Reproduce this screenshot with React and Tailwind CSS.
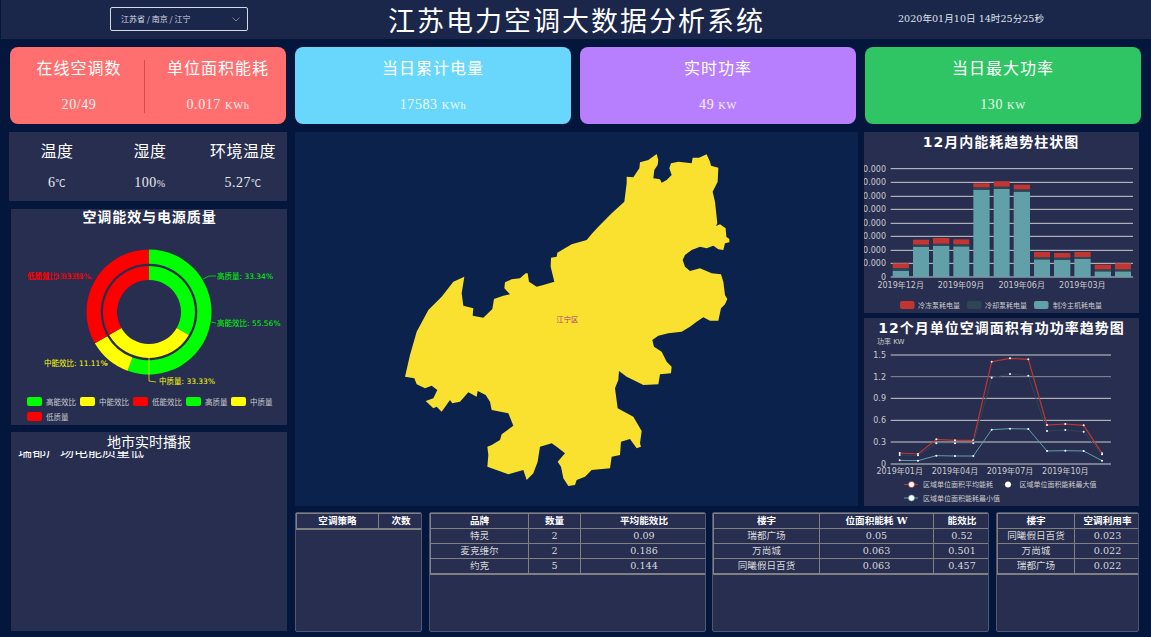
const serif = "font-['DejaVu_Serif','Noto_Sans_CJK_SC',serif]"
const SANS = "'DejaVu Sans','Noto Sans CJK SC',sans-serif"

const MAP_POINTS = `785,27 790,45 788,60 778,75 775,100 795,103 800,113 815,105 830,90 823,70 828,55 850,50 890,55 893,38 912,38 935,28 945,50 948,62 970,68 968,110 953,140 960,170 967,235 963,243 975,238 992,250 994,275 1003,282 1003,292 990,295 985,315 970,313 955,302 935,310 915,305 890,315 870,330 863,345 870,365 885,378 915,370 950,385 978,388 985,410 990,450 997,462 990,478 978,490 970,527 945,527 925,517 905,530 885,545 860,560 820,565 790,572 772,585 777,605 800,620 815,650 830,665 828,685 795,688 790,718 745,720 715,705 695,695 672,678 670,705 660,730 668,790 715,815 740,858 735,895 738,905 725,910 705,882 678,890 675,930 650,935 645,970 590,975 570,995 545,1005 540,1020 520,1023 505,1000 498,965 488,950 510,925 485,905 470,895 435,905 428,950 415,985 395,1005 385,975 340,988 277,965 280,930 277,905 290,900 315,885 320,868 355,842 340,805 290,795 285,770 272,750 248,738 245,755 220,742 195,770 172,775 165,765 140,800 125,785 115,790 92,768 115,760 127,735 110,722 90,730 65,718 58,700 30,695 45,630 65,560 100,495 140,455 175,410 208,395 200,445 205,482 235,490 233,512 265,518 292,492 297,462 325,452 345,448 328,430 330,412 350,403 375,400 392,385 398,385 402,410 425,425 445,420 478,410 467,365 468,338 485,335 487,323 530,298 575,285 592,265 610,245 630,225 650,205 688,170 695,115 695,95 715,97 733,70 735,52 760,45`

// bar chart numbers are in zoomed px, converted in Bars()
const BARS = [
  [98, 147, 428, 420, 406], [159, 207, 356, 350, 335], [219, 268, 353, 347, 330], [280, 328, 355, 349, 334],
  [340, 389, 185, 178, 166], [401, 449, 183, 176, 160], [461, 510, 191, 184, 170], [522, 570, 394, 388, 372],
  [582, 631, 395, 389, 375], [643, 692, 392, 387, 372], [704, 753, 430, 424, 410], [765, 813, 430, 424, 406],
]
const LINE_X = [119, 174, 229, 285, 340, 395, 450, 505, 561, 616, 671, 726]
const LINES = [
  { color: '#c23531', width: 1.2, ys: [414, 417, 373, 376, 376, 140, 130, 133, 330, 327, 331, 415] },
  { color: '#2f4554', width: 1, ys: [420, 421, 385, 385, 385, 188, 177, 182, 348, 345, 350, 418] },
  { color: '#61a0a8', width: 1, ys: [436, 437, 422, 423, 423, 344, 341, 342, 408, 407, 408, 437] },
]

const TABLES = [
  { cls: 'w-[127px]', cols: ['82px', '45px'], head: ['空调策略', '次数'], rows: [] },
  { cls: 'w-[277px] ml-[7px]', cols: ['98px', '52px', '127px'], head: ['品牌', '数量', '平均能效比'], rows: [['特灵', '2', '0.09'], ['麦克维尔', '2', '0.186'], ['约克', '5', '0.144']] },
  { cls: 'w-[277px] ml-[6px]', cols: ['106px', '114px', '57px'], head: ['楼宇', '位面积能耗 W', '能效比'], rows: [['瑞都广场', '0.05', '0.52'], ['万尚城', '0.063', '0.501'], ['同曦假日百货', '0.063', '0.457']] },
  { cls: 'w-[143px] ml-[7px]', cols: ['77px', '66px'], head: ['楼宇', '空调利用率'], rows: [['同曦假日百货', '0.023'], ['万尚城', '0.022'], ['瑞都广场', '0.022']] },
]

function arc(cx, cy, r0, r1, a0, a1) {
  const pt = (r, a) => {
    const t = (a - 90) * Math.PI / 180
    return `${(cx + r * Math.cos(t)).toFixed(2)} ${(cy + r * Math.sin(t)).toFixed(2)}`
  }
  const big = a1 - a0 > 180 ? 1 : 0
  return `M${pt(r1, a0)}A${r1} ${r1} 0 ${big} 1 ${pt(r1, a1)}L${pt(r0, a1)}A${r0} ${r0} 0 ${big} 0 ${pt(r0, a0)}Z`
}

function StatItem({ title, value, unit, className = 'flex-1' }) {
  return (
    <div className={`flex flex-col items-center pt-[10px] ${className}`}>
      <div className="font-['Noto_Sans_CJK_SC',sans-serif] text-[16px] leading-[20px] tracking-[1px]">{title}</div>
      <div className="mt-[18px] text-[14px] leading-[20px] text-white/90 font-['Liberation_Serif','Noto_Sans_CJK_SC',serif] tracking-[0.6px]">
        {value}{unit && <span className="text-[10.5px] ml-[4px]">{unit}</span>}
      </div>
    </div>
  )
}

function Donut() {
  const cx = 149, cy = 312
  const outer = [['#00ff00', 0, 200], ['#ffff00', 200, 240], ['#ff0000', 240, 360]]
  const inner = [['#00ff00', 0, 120], ['#ffff00', 120, 240], ['#ff0000', 240, 360]]
  const legend = [
    [27, 402, '#00ff00', '高能效比'], [80, 402, '#ffff00', '中能效比'], [133, 402, '#ff0000', '低能效比'],
    [186, 402, '#00ff00', '高质量'], [231, 402, '#ffff00', '中质量'], [27, 417, '#ff0000', '低质量'],
  ]
  return (
    <svg className="w-full h-full block" viewBox="11 209 276 216" fontFamily={SANS}>
      <text x="149.5" y="222" textAnchor="middle" fill="#fff" fontSize="14" fontWeight="700" letterSpacing="0.9">空调能效与电源质量</text>
      {outer.map(([c, a, b]) => <path key={a} d={arc(cx, cy, 48.3, 62.5, a, b)} fill={c} />)}
      {inner.map(([c, a, b]) => <path key={a} d={arc(cx, cy, 32, 46, a, b)} fill={c} />)}
      <path d="M203 279L209 276H216" fill="none" stroke="#00ff00" strokeWidth="0.7" />
      <path d="M211 322L216 323" fill="none" stroke="#00ff00" strokeWidth="0.7" />
      <path d="M149 358V381L156 382" fill="none" stroke="#ffff00" strokeWidth="0.7" />
      <path d="M108 364L104 364" fill="none" stroke="#ffff00" strokeWidth="0.7" />
      <path d="M93 279L88 277" fill="none" stroke="#ff0000" strokeWidth="0.7" />
      <g fontSize="7.5">
        <text x="217" y="279" fill="#00ff00">高质量: 33.34%</text>
        <text x="217" y="326" fill="#00ff00">高能效比: 55.56%</text>
        <text x="159" y="384" fill="#ffff00">中质量: 33.33%</text>
        <text x="44" y="366" fill="#ffff00">中能效比: 11.11%</text>
        <text x="27" y="279" fill="#ff0000">低能效比: 33.33%</text>
        <text x="27" y="279" fill="#ff0000">低质量: 33.33%</text>
      </g>
      {legend.map(([x, y, c, t]) => (
        <g key={t}>
          <rect x={x} y={y - 5} width="15" height="9" rx="2" fill={c} />
          <text x={x + 19} y={y + 3} fontSize="7.5" fill="#cccccc">{t}</text>
        </g>
      ))}
    </svg>
  )
}

function Bars() {
  const X = v => 860 + v / 3
  const Y = v => 128 + v / 3
  const grid = [122, 163, 205, 244, 286, 325, 367, 406, 447]
  const labels = ['80.000', '70.000', '60.000', '50.000', '40.000', '30.000', '20.000', '10.000', '0']
  const legend = [[900, 918, '#c23531', '冷冻泵耗电量'], [967, 985, '#2f4554', '冷却泵耗电量'], [1034, 1053, '#61a0a8', '制冷主机耗电量']]
  return (
    <svg className="w-full h-full block" viewBox="864 132 275 181" fontFamily={SANS}>
      <text x="1001" y="147" textAnchor="middle" fill="#fff" fontSize="14" fontWeight="700" letterSpacing="1">12月内能耗趋势柱状图</text>
      {grid.map((y, i) => (
        <g key={y}>
          <line x1="890.7" x2="1133" y1={Y(y)} y2={Y(y)} stroke="#cccccc" />
          <text x="886" y={Y(y) + 3} textAnchor="end" fontSize="8" fill="#cccccc">{labels[i]}</text>
        </g>
      ))}
      {BARS.map(([a, b, teal, dark, red]) => (
        <g key={a}>
          <rect x={X(a)} width={(b - a) / 3} y={Y(teal)} height={(447 - teal) / 3} fill="#61a0a8" />
          <rect x={X(a)} width={(b - a) / 3} y={Y(dark)} height={(teal - dark) / 3} fill="#2f4554" />
          <rect x={X(a)} width={(b - a) / 3} y={Y(red)} height={(dark - red) / 3} fill="#c23531" />
        </g>
      ))}
      {[['2019年12月', 122], ['2019年09月', 303], ['2019年06月', 485], ['2019年03月', 667]].map(([t, x]) => (
        <text key={t} x={X(x)} y="288" textAnchor="middle" fontSize="8" fill="#cccccc">{t}</text>
      ))}
      {legend.map(([x, tx, c, t]) => (
        <g key={t}>
          <rect x={x} y="301" width="14.5" height="8" rx="2" fill={c} />
          <text x={tx} y="308" fontSize="7" fill="#cccccc">{t}</text>
        </g>
      ))}
    </svg>
  )
}

function Lines() {
  const X = v => 860 + v / 3
  const Y = v => 315 + v / 3
  const grid = [[120, '1.5'], [185, '1.2'], [250, '0.9'], [316, '0.6'], [381, '0.3'], [447, '0']]
  return (
    <svg className="w-full h-full block" viewBox="864 318 275 188" fontFamily={SANS}>
      <text x="1001.5" y="333" textAnchor="middle" fill="#fff" fontSize="14" fontWeight="700" letterSpacing="1">12个月单位空调面积有功功率趋势图</text>
      <text x="877" y="344" fontSize="7" fill="#cccccc">功率 KW</text>
      {grid.map(([y, t]) => (
        <g key={y}>
          <line x1="890.7" x2="1111" y1={Y(y)} y2={Y(y)} stroke="#cccccc" strokeOpacity={y === 185 ? 0.6 : 1} />
          <text x="886" y={Y(y) + 3} textAnchor="end" fontSize="8" fill="#cccccc">{t}</text>
        </g>
      ))}
      {LINES.map(line => (
        <g key={line.color}>
          <polyline points={LINE_X.map((x, i) => `${X(x)},${Y(line.ys[i])}`).join(' ')} fill="none" stroke={line.color} strokeWidth={line.width} />
          {LINE_X.map((x, i) => <circle key={x} cx={X(x)} cy={Y(line.ys[i])} r="1" fill="#fff" />)}
        </g>
      ))}
      {[['2019年01月', 119], ['2019年04月', 285], ['2019年07月', 450], ['2019年10月', 616]].map(([t, x]) => (
        <text key={t} x={X(x)} y="474" textAnchor="middle" fontSize="8" fill="#cccccc">{t}</text>
      ))}
      <line x1="904" x2="918" y1="484.5" y2="484.5" stroke="#c23531" />
      <circle cx="911.5" cy="484.5" r="3" fill="#fff" stroke="#c23531" strokeWidth="0.6" />
      <text x="923" y="487" fontSize="7" fill="#cccccc">区域单位面积平均能耗</text>
      <line x1="1001" x2="1015" y1="484.5" y2="484.5" stroke="#2f4554" />
      <circle cx="1008" cy="484.5" r="3" fill="#fff" />
      <text x="1019.5" y="487" fontSize="7" fill="#cccccc">区域单位面积能耗最大值</text>
      <line x1="904" x2="918" y1="498" y2="498" stroke="#61a0a8" />
      <circle cx="911.5" cy="498" r="3" fill="#fff" stroke="#61a0a8" strokeWidth="0.6" />
      <text x="923" y="500.5" fontSize="7" fill="#cccccc">区域单位面积能耗最小值</text>
    </svg>
  )
}

function DataTable({ t }) {
  return (
    <div className={`${t.cls} h-[120px] bg-[#272e50] border border-[#4f5772] rounded-[2px] overflow-hidden`}>
      <table className={`w-full table-fixed border-collapse text-[9.6px] border-b-2 border-b-[#808080] ${serif}`}>
        <colgroup>{t.cols.map((w, i) => <col key={i} style={{ width: w }} />)}</colgroup>
        <thead>
          <tr className="h-[15px]">
            {t.head.map(h => <th key={h} className="border border-[#808080] p-0 font-bold text-white leading-none">{h}</th>)}
          </tr>
        </thead>
        {t.rows.length > 0 && (
          <tbody>
            {t.rows.map(r => (
              <tr key={r[0]} className="h-[15px]">
                {r.map((c, i) => <td key={i} className="border border-[#808080] p-0 text-center text-[#d8d8d8] leading-none">{c}</td>)}
              </tr>
            ))}
          </tbody>
        )}
      </table>
    </div>
  )
}

export default function App() {
  return (
    <div className="w-[1151px] h-[637px] bg-[#04163b] overflow-hidden text-white">
      {/* Header */}
      <div className="h-[39px] ml-px bg-[#1a274a] flex items-center relative">
        <div className="absolute left-[109px] top-[7px] w-[138px] h-[24px] border border-[#d5d9e3] rounded-[2px] flex items-center justify-between pl-[10px] pr-[7px] font-['Noto_Sans_CJK_SC',sans-serif] text-[8px] text-[#d8dbe3]">
          <span>江苏省 / 南京 / 江宁</span>
          <svg width="8" height="5" viewBox="0 0 8 5" fill="none" stroke="#8e96ab" strokeWidth="0.8"><path d="M0.5 0.5L4 4L7.5 0.5" /></svg>
        </div>
        <div className="w-full pl-[1px] text-center font-['Noto_Sans_CJK_SC',sans-serif] text-[27px] leading-[36px] tracking-[2px]">江苏电力空调大数据分析系统</div>
        <div className={`absolute left-[897px] top-[12px] text-[9.6px] leading-[14px] text-[#dfe2ea] ${serif}`}>2020年01月10日 14时25分25秒</div>
      </div>

      {/* Stat cards */}
      <div className="mt-2 px-[10px] grid grid-cols-4 gap-[9px]">
        <div className="h-[77px] rounded-lg flex text-white bg-[#ff6f6f]">
          <StatItem className="w-[134px] pl-[4px]" title="在线空调数" value="20/49" />
          <div className="w-px h-[53px] mt-[13px] bg-[#d9484f]" />
          <StatItem className="flex-1 pl-[5px]" title="单位面积能耗" value="0.017" unit="KWh" />
        </div>
        <div className="h-[77px] rounded-lg flex text-white bg-[#69d7fb]"><StatItem title="当日累计电量" value="17583" unit="KWh" /></div>
        <div className="h-[77px] rounded-lg flex text-white bg-[#b77efd]"><StatItem title="实时功率" value="49" unit="KW" /></div>
        <div className="h-[77px] rounded-lg flex text-white bg-[#30c564]"><StatItem title="当日最大功率" value="130" unit="KW" /></div>
      </div>

      <div className="mt-2 ml-[9px] flex">
        {/* Left column */}
        <div className="w-[278px] flex flex-col">
          <div className="h-[69px] bg-[#272e50] grid grid-cols-[96px_90px_92px]">
            {[['温度', '6', '℃', ''], ['湿度', '100', '%', ''], ['环境温度', '5.27', '℃', 'pl-[4px]']].map(([t, v, u, cls]) => (
              <div key={t} className={`flex flex-col items-center pt-[8px] whitespace-nowrap ${cls}`}>
                <div className="font-['Noto_Sans_CJK_SC',sans-serif] text-[16px] leading-[20px] tracking-[0.5px]">{t}</div>
                <div className="mt-[14px] font-['Liberation_Serif','Noto_Sans_CJK_SC',serif] text-[14px] leading-[18px] tracking-[0.5px] text-white/90">
                  {v}<span className="text-[10px]">{u}</span>
                </div>
              </div>
            ))}
          </div>
          <div className="ml-[2px] mt-[8px] h-[216px] bg-[#272e50]"><Donut /></div>
          <div className="ml-[2px] mt-[7px] h-[199px] bg-[#272e50] flex flex-col">
            <div className="text-center font-['Noto_Sans_CJK_SC',sans-serif] text-[14px] leading-[19px]">地市实时播报</div>
            {/* ticker, caught mid-scroll */}
            <div className="overflow-hidden">
              <div className="-mt-[11px] pl-[7px] font-['Noto_Sans_CJK_SC',sans-serif] text-[14px] leading-[20px]">瑞都广场电能质量低</div>
            </div>
          </div>
        </div>

        <div className="ml-[8px] w-[844px] flex flex-col">
          <div className="h-[374px] flex gap-[6px]">
            {/* Map */}
            <div className="w-[563px] bg-[#0a224c]">
              <svg className="w-full h-full block" viewBox="295 132 563 374">
                <g transform="translate(395 145) scale(0.33333)">
                  <polygon points={MAP_POINTS} fill="#fae02f" />
                  <text x="517" y="530" textAnchor="middle" fontSize="22" fontFamily={SANS} fill="#b0308c">江宁区</text>
                </g>
              </svg>
            </div>
            {/* Right charts */}
            <div className="w-[275px] flex flex-col gap-[5px]">
              <div className="h-[181px] bg-[#272e50]"><Bars /></div>
              <div className="h-[188px] bg-[#272e50]"><Lines /></div>
            </div>
          </div>
          {/* Tables */}
          <div className="mt-[6px] flex">
            {TABLES.map((t, i) => <DataTable key={i} t={t} />)}
          </div>
        </div>
      </div>
    </div>
  )
}
